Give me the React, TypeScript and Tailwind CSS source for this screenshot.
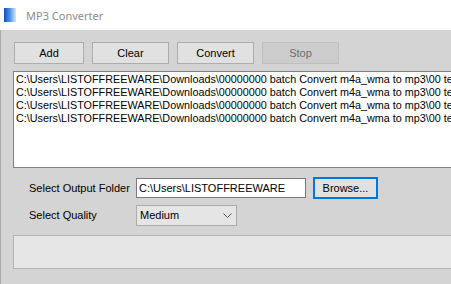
import React from "react";

const line = "C:\\Users\\LISTOFFREEWARE\\Downloads\\00000000 batch Convert m4a_wma to mp3\\00 test file.m4a";

function Btn({ label, w, disabled }: { label: string; w: string; disabled?: boolean }) {
  return (
    <div
      className={
        "h-[22px] flex items-center justify-center border " +
        w +
        " " +
        (disabled
          ? "bg-[#cccccc] border-[#bfbfbf] text-[#6d6d6d]"
          : "bg-[#e1e1e1] border-[#adadad] text-black")
      }
    >
      {label}
    </div>
  );
}

export default function App() {
  return (
    <div
      className="w-[451px] h-[284px] overflow-hidden flex flex-col bg-[#d4d4d4] text-[11px] leading-[13px]"
      style={{ fontFamily: '"Liberation Sans", Arial, sans-serif' }}
    >
      <div className="h-[30px] shrink-0 bg-white flex items-center">
        <div className="ml-[4px] w-[12px] h-[14px] bg-gradient-to-r from-[#0a4fc4] via-[#4f94e0] to-[#d6e8fa]" />
        <span
          className="ml-[10px] text-[11px] text-[#8c8c8c]"
          style={{ fontFamily: '"Noto Sans", "Open Sans", sans-serif' }}
        >
          MP3 Converter
        </span>
      </div>
      <div className="flex-1 border-l border-[#a8a8a8] pl-[13px] pt-[12px] flex flex-col">
        <div className="flex gap-[8px]">
          <Btn label="Add" w="w-[70px]" />
          <Btn label="Clear" w="w-[77px]" />
          <Btn label="Convert" w="w-[77px]" />
          <Btn label="Stop" w="w-[77px]" disabled />
        </div>
        <div className="mt-[7px] -ml-[1px] w-[480px] h-[97px] border border-[#828282] bg-white pl-[2px] pt-[1px] whitespace-nowrap text-black text-[10.8px] overflow-hidden">
          <div>{line}</div>
          <div>{line}</div>
          <div>{line}</div>
          <div>{line}</div>
        </div>
        <div className="mt-[9px] flex items-center h-[22px]">
          <div className="w-[122px] pl-[15px] text-black">Select Output Folder</div>
          <div className="w-[170px] h-[20px] border border-[#7a7a7a] bg-white flex items-center pl-[2px] text-black whitespace-nowrap overflow-hidden">
            C:\Users\LISTOFFREEWARE
          </div>
          <div className="ml-[7px] w-[65px] h-[22px] border-2 border-[#0078d7] bg-[#e1e1e1] flex items-center justify-center text-black">
            Browse...
          </div>
        </div>
        <div className="mt-[6px] flex items-center h-[21px]">
          <div className="w-[122px] pl-[15px] text-black">Select Quality</div>
          <div className="w-[101px] h-[21px] border border-[#acacac] bg-[#e5e5e5] flex items-center justify-between pl-[3px] pr-[4px] text-black">
            <span>Medium</span>
            <svg width="9" height="5" viewBox="0 0 9 5">
              <path d="M0.5 0.5 L4.5 4.5 L8.5 0.5" fill="none" stroke="#555" strokeWidth="1" />
            </svg>
          </div>
        </div>
        <div className="mt-[9px] -ml-[1px] w-[480px] h-[34px] border border-[#b4b4b4] bg-[#e6e6e6]" />
      </div>
    </div>
  );
}
